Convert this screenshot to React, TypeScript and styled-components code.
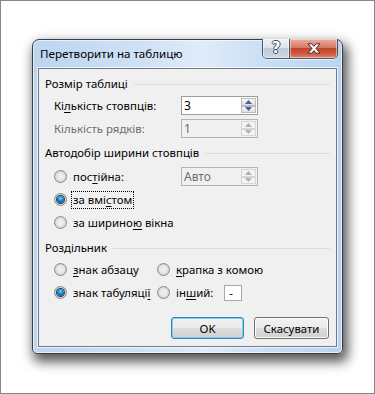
import React from "react";
import styled, { createGlobalStyle, css } from "styled-components";

const Global = createGlobalStyle`
  html, body { margin: 0; padding: 0; background: #fff; }
  body { font-family: "Noto Sans", "DejaVu Sans", sans-serif; font-size: 11.4px; color: #000; }
`;

const Screen = styled.div`
  box-sizing: border-box;
  width: 375px;
  height: 394px;
  border: 1px solid #868686;
  background: #fff;
  padding: 38px 0 0 31px;
`;

const Window = styled.div`
  box-sizing: border-box;
  width: 311px;
  height: 315px;
  border: 1px solid #3a3f46;
  border-radius: 7px 7px 5px 5px;
  background:
    linear-gradient(90deg, #bcd5f1 0%, #cfe1f5 35%, #e0ecf9 55%, #cadef4 75%, #b9d3f0 100%);
  box-shadow: 3px 6px 12px 2px rgba(0, 0, 0, 0.65), inset 0 0 0 1px rgba(255, 255, 255, 0.6);
  display: flex;
  flex-direction: column;
`;

const TitleBar = styled.div`
  height: 28px;
  display: flex;
  align-items: flex-start;
  padding: 0 4px 0 7px;
`;

const Title = styled.div`
  flex: 1;
  margin-top: 5px;
  font-size: 11.6px;
  line-height: 17px;
  color: #000;
  white-space: nowrap;
`;

const CaptionGroup = styled.div`
  display: flex;
  margin-top: -1px;
  border: 1px solid #4c5561;
  border-top: none;
  border-radius: 0 0 5px 5px;
  overflow: hidden;
  box-shadow: 0 1px 0 rgba(255, 255, 255, 0.7);
`;

const CaptionButton = styled.div<{ $kind: "help" | "close" }>`
  height: 19px;
  display: flex;
  align-items: center;
  justify-content: center;
  box-shadow: inset 0 0 0 1px rgba(255, 255, 255, 0.45);
  ${(p) =>
    p.$kind === "help"
      ? css`
          width: 26px;
          border-right: 1px solid #4c5561;
          background: linear-gradient(180deg, #eef3f9 0%, #dbe4ee 45%, #bfcbd9 50%, #cdd8e4 100%);
        `
      : css`
          width: 47px;
          background: linear-gradient(180deg, #eab0a3 0%, #d9775f 45%, #c2432a 50%, #cf5d44 80%, #e08a72 100%);
        `}
`;

const HelpGlyph = styled.span`
  font-family: "DejaVu Sans", sans-serif;
  font-weight: bold;
  font-size: 15px;
  line-height: 15px;
  color: #fff;
  text-shadow: 1px 0 0 #3e4652, -1px 0 0 #3e4652, 0 1px 0 #3e4652, 0 -1px 0 #3e4652;
`;

const Client = styled.div`
  flex: 1;
  margin: 0 5px 6px 5px;
  border: 1px solid #6d7b8c;
  outline: 1px solid rgba(255, 255, 255, 0.7);
  background: #f0f0f0;
  padding: 7px 6px 0 6px;
  display: flex;
  flex-direction: column;
`;

const GroupHeader = styled.div<{ $top: number }>`
  height: 16px;
  margin-top: ${(p) => p.$top}px;
  display: flex;
  align-items: center;
  gap: 6px;
  color: #000;
  line-height: 16px;
  &::after {
    content: "";
    flex: 1;
    height: 1px;
    background: #d5dfe5;
  }
`;

const Row = styled.div<{ $top: number; $h?: number }>`
  height: ${(p) => p.$h ?? 19}px;
  margin-top: ${(p) => p.$top}px;
  display: flex;
  align-items: center;
  padding-left: 9px;
`;

const FieldLabel = styled.div<{ $disabled?: boolean }>`
  width: 127px;
  color: ${(p) => (p.$disabled ? "#6d6d6d" : "#000")};
  white-space: nowrap;
`;

const Col = styled.div<{ $w: number }>`
  width: ${(p) => p.$w}px;
  display: flex;
  align-items: center;
`;

const Spin = styled.div<{ $disabled?: boolean }>`
  box-sizing: border-box;
  width: 77px;
  height: 19px;
  border: 1px solid ${(p) => (p.$disabled ? "#b4b4b4" : "#9c9c9c")};
  background: ${(p) => (p.$disabled ? "#f0f0f0" : "#fff")};
  display: flex;
`;

const SpinText = styled.div<{ $disabled?: boolean }>`
  flex: 1;
  padding-left: 2px;
  font-size: 12px;
  line-height: 17px;
  color: ${(p) => (p.$disabled ? "#6d6d6d" : "#000")};
`;

const SpinButtons = styled.div`
  width: 15px;
  display: flex;
  flex-direction: column;
  padding: 1px 1px 1px 0;
`;

const SpinButton = styled.div<{ $disabled?: boolean }>`
  flex: 1;
  box-sizing: border-box;
  border: 1px solid ${(p) => (p.$disabled ? "#d6d6d6" : "#bcbcbc")};
  background: ${(p) =>
    p.$disabled ? "#f4f4f4" : "linear-gradient(180deg, #f7f7f7 0%, #ebebeb 50%, #dedede 100%)"};
  display: flex;
  align-items: center;
  justify-content: center;
`;

const RadioCircle = styled.span<{ $checked?: boolean }>`
  box-sizing: border-box;
  width: 13px;
  height: 13px;
  border-radius: 50%;
  border: 1px solid #8a8a8a;
  background: radial-gradient(circle at 50% 50%, #f4f4f4 0%, #e6e6e6 45%, #d2d2d2 70%, #f7f7f7 100%);
  display: inline-flex;
  align-items: center;
  justify-content: center;
  flex-shrink: 0;
  ${(p) =>
    p.$checked &&
    css`
      &::after {
        content: "";
        width: 7px;
        height: 7px;
        border-radius: 50%;
        background: radial-gradient(circle at 50% 35%, #7fd3f7 0%, #2a8fd0 35%, #0e4f8f 80%);
        box-shadow: 0 0 0 1px #1a3e66;
      }
    `}
`;

const RadioLabel = styled.span<{ $focus?: boolean }>`
  margin-left: 4px;
  padding: 0 1px;
  line-height: 16px;
  white-space: nowrap;
  border: 1px dotted ${(p) => (p.$focus ? "#000" : "transparent")};
`;

const Key = styled.u`
  text-underline-offset: 2px;
`;

const SmallBox = styled.div`
  box-sizing: border-box;
  width: 18px;
  height: 16px;
  margin-left: 9px;
  border: 1px solid #a8a8a8;
  background: #fff;
  line-height: 13px;
  padding-left: 4px;
`;

const ButtonRow = styled.div`
  margin-top: 15px;
  display: flex;
  justify-content: flex-end;
  gap: 10px;
  padding-right: 1px;
`;

const Button = styled.div<{ $default?: boolean; $w: number }>`
  box-sizing: border-box;
  width: ${(p) => p.$w}px;
  height: 22px;
  border-radius: 3px;
  border: 1px solid ${(p) => (p.$default ? "#3c7fb1" : "#707070")};
  background: linear-gradient(180deg, #f2f2f2 0%, #ebebeb 48%, #dddddd 52%, #cfcfcf 100%);
  box-shadow: inset 0 0 0 1px ${(p) => (p.$default ? "#7fd1f5" : "#fbfbfb")};
  display: flex;
  align-items: center;
  justify-content: center;
  color: #000;
`;

function Arrow({ up, disabled }: { up?: boolean; disabled?: boolean }) {
  const fill = disabled ? "#b1b1b1" : "#3f62a3";
  return (
    <svg width="7" height="4" viewBox="0 0 7 4">
      <polygon points={up ? "0,4 7,4 3.5,0" : "0,0 7,0 3.5,4"} fill={fill} />
    </svg>
  );
}

function SpinBox({ value, disabled }: { value: string; disabled?: boolean }) {
  return (
    <Spin $disabled={disabled}>
      <SpinText $disabled={disabled}>{value}</SpinText>
      <SpinButtons>
        <SpinButton $disabled={disabled}>
          <Arrow up disabled={disabled} />
        </SpinButton>
        <SpinButton $disabled={disabled}>
          <Arrow disabled={disabled} />
        </SpinButton>
      </SpinButtons>
    </Spin>
  );
}

function Radio({ checked, focus, children }: { checked?: boolean; focus?: boolean; children: React.ReactNode }) {
  return (
    <>
      <RadioCircle $checked={checked} />
      <RadioLabel $focus={focus}>{children}</RadioLabel>
    </>
  );
}

export default function App() {
  return (
    <>
      <Global />
      <Screen>
        <Window>
          <TitleBar>
            <Title>Перетворити на таблицю</Title>
            <CaptionGroup>
              <CaptionButton $kind="help">
                <HelpGlyph>?</HelpGlyph>
              </CaptionButton>
              <CaptionButton $kind="close">
                <svg width="14" height="11" viewBox="0 0 14 11">
                  <path
                    d="M1 0.8 L4.8 0.8 L7 3.4 L9.2 0.8 L13 0.8 L9 5.5 L13 10.2 L9.2 10.2 L7 7.6 L4.8 10.2 L1 10.2 L5 5.5 Z"
                    fill="#fff"
                    stroke="#4a2a26"
                    strokeWidth="1"
                    strokeLinejoin="round"
                  />
                </svg>
              </CaptionButton>
            </CaptionGroup>
          </TitleBar>
          <Client>
            <GroupHeader $top={0}>Розмір таблиці</GroupHeader>
            <Row $top={4}>
              <FieldLabel>
                Кі<Key>л</Key>ькість стовпців:
              </FieldLabel>
              <SpinBox value="3" />
            </Row>
            <Row $top={4}>
              <FieldLabel $disabled>Кількість рядків:</FieldLabel>
              <SpinBox value="1" disabled />
            </Row>
            <GroupHeader $top={7}>Автодобір ширини стовпців</GroupHeader>
            <Row $top={6}>
              <Col $w={127}>
                <Radio>
                  пос<Key>т</Key>ійна:
                </Radio>
              </Col>
              <SpinBox value="Авто" disabled />
            </Row>
            <Row $top={4}>
              <Radio checked focus>
                за вмі<Key>с</Key>том
              </Radio>
            </Row>
            <Row $top={4}>
              <Radio>
                за ширино<Key>ю</Key> вікна
              </Radio>
            </Row>
            <GroupHeader $top={8}>Роздільник</GroupHeader>
            <Row $top={4}>
              <Col $w={103}>
                <Radio>
                  <Key>з</Key>нак абзацу
                </Radio>
              </Col>
              <Radio>
                <Key>к</Key>рапка з комою
              </Radio>
            </Row>
            <Row $top={4}>
              <Col $w={103}>
                <Radio checked>
                  знак табуляці<Key>ї</Key>
                </Radio>
              </Col>
              <Radio>
                ін<Key>ш</Key>ий:
              </Radio>
              <SmallBox>-</SmallBox>
            </Row>
            <ButtonRow>
              <Button $default $w={73}>
                OK
              </Button>
              <Button $w={75}>Скасувати</Button>
            </ButtonRow>
          </Client>
        </Window>
      </Screen>
    </>
  );
}
